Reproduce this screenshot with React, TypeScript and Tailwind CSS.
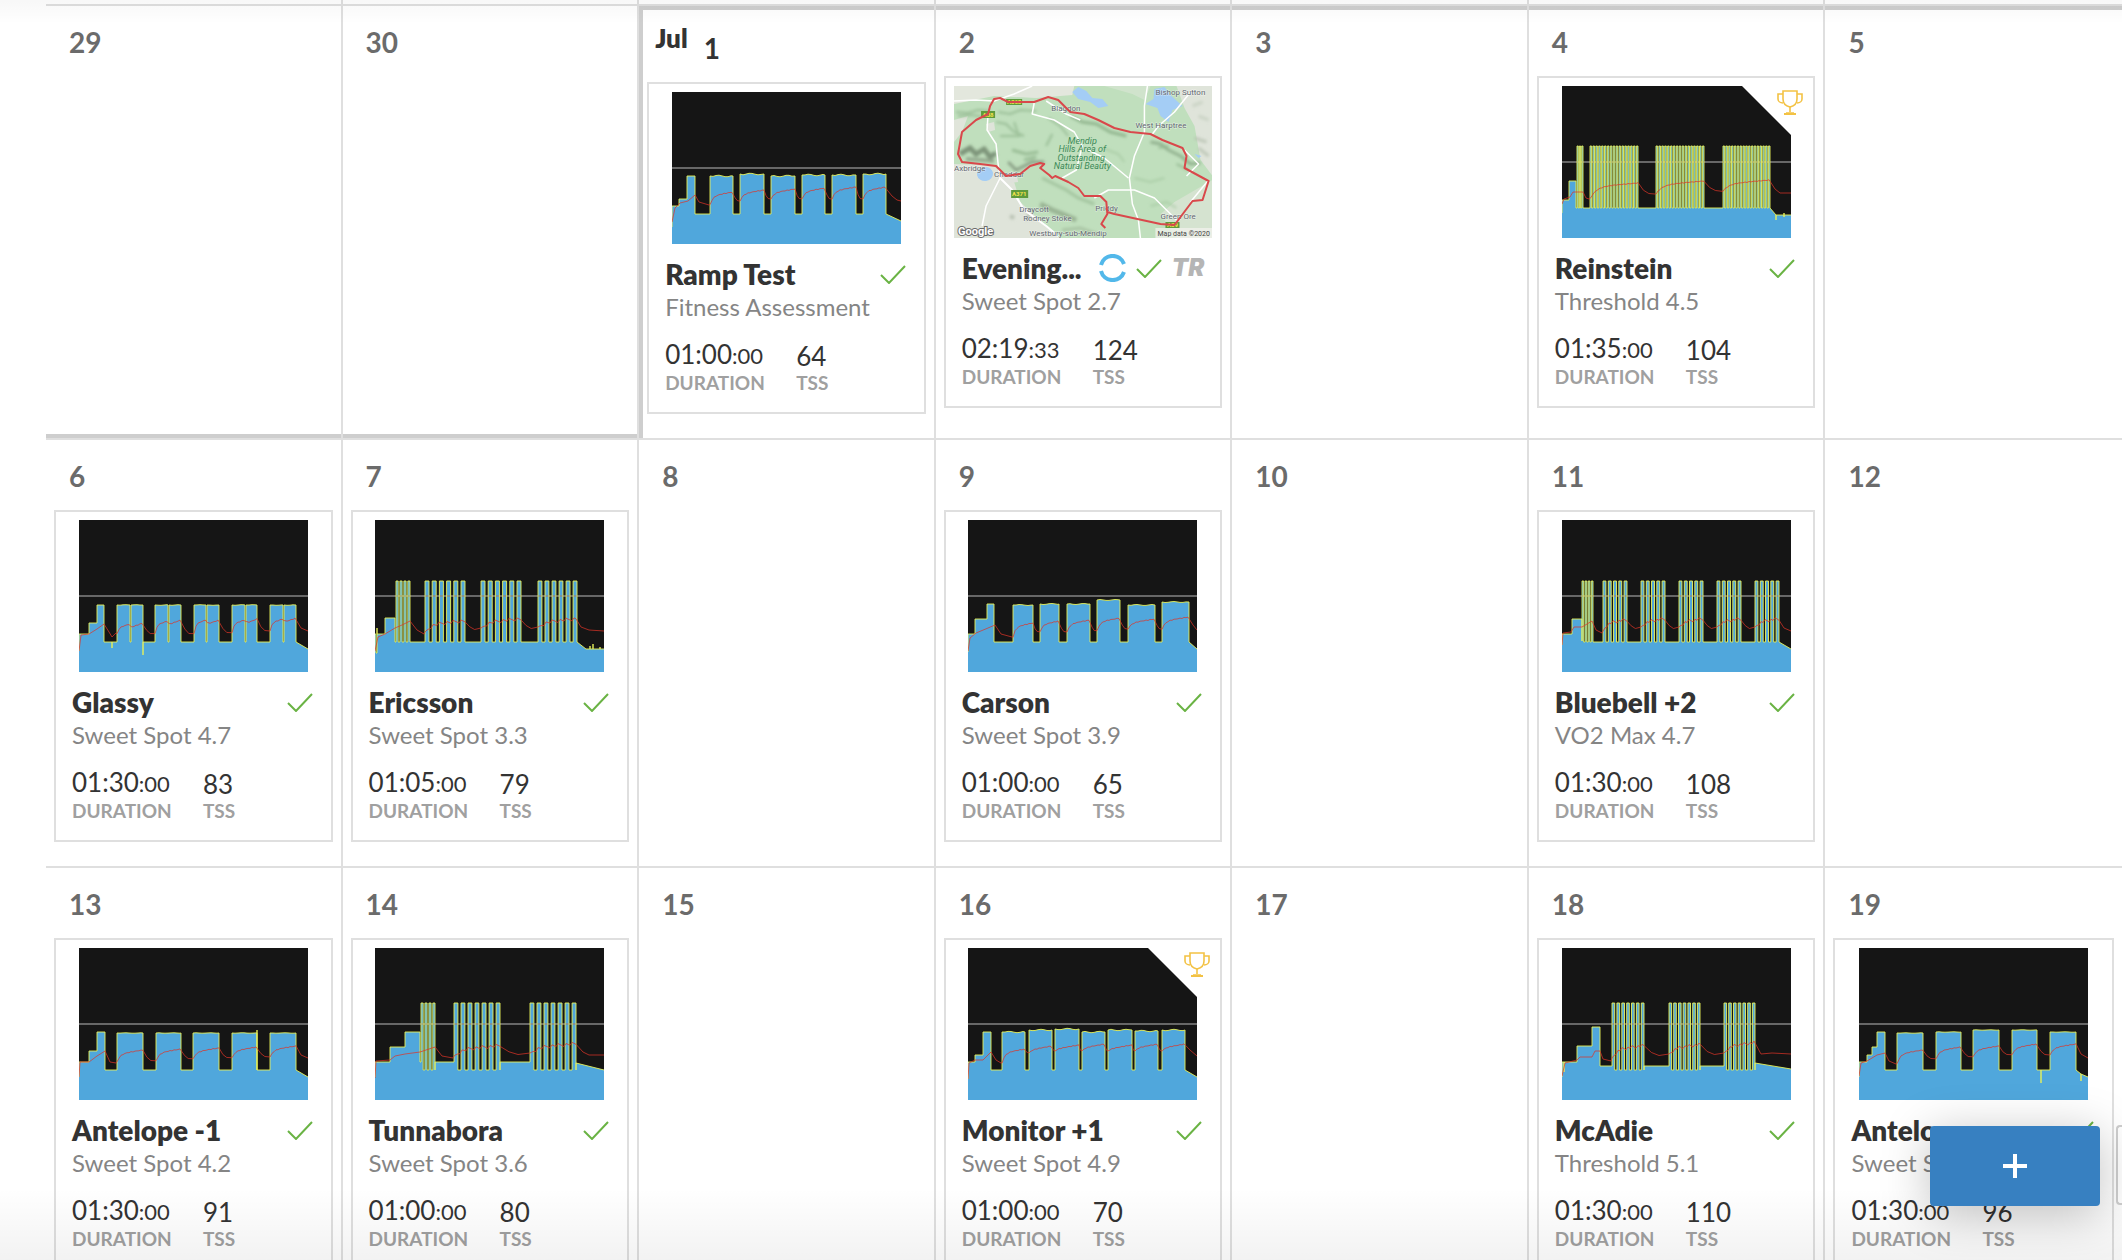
import React from "react";
import { clsx } from "clsx";

type Point = [number, number];
// [start x, end x, top y]
type Block = [number, number, number];
// [start x, end x, resting y, peak y, sawtooth period]
type Effort = [number, number, number, number, number?];

interface Chart {
  power: string;
  heart: string;
}

interface Workout {
  name: string;
  level: string;
  time: string;
  seconds: string;
  tss: number;
  chart?: Chart;
  record?: boolean;
  outside?: boolean;
}

interface Day {
  date: number;
  month?: string;
  edge?: string;
  workout?: Workout;
}

const CHART_W = 229;
const CHART_H = 152;

function blocks(list: Block[], low: number, wobble = 0) {
  return list
    .map(([from, to, top]) => {
      let d = `H${from}V${top}`;
      for (let x = from + 3; wobble && x < to; x += 3) {
        d += `L${x} ${(top + Math.sin(x * 1.7) * wobble).toFixed(1)}`;
      }
      return d + `L${to} ${top}V${low}`;
    })
    .join("");
}

function bursts(from: number, to: number, count: number, top: number, low: number) {
  const period = (to - from) / (count - 0.45);
  const bar = period * 0.55;
  let d = `H${from}`;
  for (let i = 0; i < count; i++) {
    const x = from + i * period;
    d += `H${x.toFixed(1)}V${top}H${(x + bar).toFixed(1)}V${low}`;
  }
  return d;
}

function heart(start: Point[], efforts: Effort[], end: Point[]) {
  const pts: Point[] = [...start];
  efforts.forEach(([from, to, rest, peak, saw], i) => {
    for (let x = from; x <= to; x += 2) {
      const t = (x - from) / (to - from);
      const base = peak + (1 - t) * 4 + (rest - peak - 4) * Math.exp(-t * 8);
      const tooth = saw ? (((x - from) % saw) / saw - 0.5) * 4 : Math.sin(x * 1.3) * 0.4;
      pts.push([x, base + tooth]);
    }
    const next = efforts[i + 1];
    if (next) {
      const gap = next[0] - to;
      pts.push([to + gap * 0.3, peak + (next[2] - peak) * 0.65]);
      pts.push([to + gap * 0.6, next[2] - 0.5]);
    }
  });
  return "M" + [...pts, ...end].map(([x, y]) => `${x.toFixed(1)} ${y.toFixed(1)}`).join("L");
}

const rampTest: Chart = {
  power:
    "M0 135V114H7V107H15V84H23V122" +
    blocks([[38, 61, 84], [68, 92, 82], [99, 123, 84], [130, 153, 83], [160, 184, 83], [191, 214, 82]], 122, 0.8) +
    "L229 129",
  heart: heart(
    [[0, 130], [3, 116], [8, 111], [16, 109], [23, 103], [27, 110], [37, 113]],
    [[38, 61, 113, 100], [68, 92, 109, 98], [99, 123, 107, 97], [130, 153, 107, 96], [160, 184, 107, 95], [191, 214, 107, 95]],
    [[220, 104], [225, 108], [229, 109]],
  ),
};

const reinstein: Chart = {
  power:
    "M0 127V114H7V95H14V122" +
    bursts(15, 21, 3, 60, 122) +
    bursts(28, 76, 17, 60, 122) +
    bursts(94, 142, 17, 60, 122) +
    bursts(161, 208, 17, 60, 122) +
    "L214 129V134V129H222V127V131V129H229",
  heart: heart(
    [[0, 118], [2, 113], [8, 111], [11, 106], [21, 106], [24, 112], [27, 113]],
    [[28, 76, 113, 97], [94, 142, 108, 95], [161, 208, 105, 94]],
    [[213, 103], [218, 107], [229, 107]],
  ),
};

const glassy: Chart = {
  power:
    "M0 131V114H10V103H18V85H25V122H33V128V122" +
    blocks([[38, 51, 85], [52, 64, 85]], 122, 0.3) +
    "V135V122" +
    blocks(
      [[76, 89, 85], [90, 102, 85], [115, 127, 85], [128, 140, 85], [153, 166, 85], [167, 178, 85], [191, 204, 85], [205, 217, 85]],
      122,
      0.3,
    ) +
    "L229 129",
  heart: heart(
    [[0, 131], [2, 115], [10, 114], [18, 109], [25, 104], [30, 112], [33, 117], [37, 113]],
    [[38, 51, 114, 104], [53, 64, 107, 103], [76, 89, 114, 101], [91, 102, 104, 100], [115, 127, 114, 100], [129, 140, 103, 100],
      [153, 166, 113, 100], [168, 178, 102, 99], [191, 204, 111, 99], [206, 217, 101, 98]],
    [[222, 108], [229, 111]],
  ),
};

const ericsson: Chart = {
  power:
    "M0 114H1V133H2V108V114H10V98H20V122" +
    bursts(21, 35, 4, 61, 122) +
    bursts(50, 90, 6, 61, 122) +
    bursts(106, 146, 6, 61, 122) +
    bursts(163, 202, 6, 61, 122) +
    "L211 129H215V126V129H218V124V129H225V127V129H229",
  heart: heart(
    [[0, 131], [3, 117], [10, 114], [20, 108], [27, 105], [35, 101], [42, 110], [49, 114]],
    [[50, 90, 114, 101, 7], [106, 146, 110, 99, 7], [163, 202, 109, 99, 7]],
    [[206, 107], [214, 110], [229, 111]],
  ),
};

const carson: Chart = {
  power:
    "M0 132V114H7V99H19V84H26V122" +
    blocks([[45, 65, 85], [72, 91, 84], [99, 122, 84], [129, 152, 80], [160, 187, 85], [194, 221, 82]], 122, 0.5) +
    "L229 129",
  heart: heart(
    [[0, 131], [2, 118], [8, 113], [20, 108], [27, 105], [33, 114], [44, 117]],
    [[45, 65, 117, 103], [72, 91, 112, 101], [99, 122, 112, 100], [129, 152, 111, 98], [160, 187, 109, 99], [194, 221, 109, 97]],
    [[225, 105], [229, 110]],
  ),
};

const bluebell: Chart = {
  power:
    "M0 125V114H10V99H20V121" +
    bursts(20, 31, 4, 61, 122) +
    bursts(41, 65, 5, 61, 122) +
    bursts(79, 103, 5, 61, 122) +
    bursts(117, 141, 5, 61, 122) +
    bursts(155, 179, 5, 61, 122) +
    bursts(193, 217, 5, 61, 122) +
    "L229 129",
  heart: heart(
    [[0, 125], [1, 113], [9, 112], [12, 107], [20, 107], [30, 101], [34, 110], [40, 113]],
    [[41, 65, 113, 100, 5], [79, 103, 109, 99, 5], [117, 141, 109, 99, 5], [155, 179, 109, 99, 5], [193, 217, 109, 99, 5]],
    [[222, 108], [229, 111]],
  ),
};

const antelopeMinus: Chart = {
  power:
    "M0 129V114H10V103H18V84H26V122" +
    blocks([[38, 64, 85], [77, 102, 85], [114, 140, 85], [153, 178, 85]], 122, 0.2) +
    "V82V122" +
    blocks([[191, 217, 85]], 122, 0.2) +
    "L229 129",
  heart: heart(
    [[0, 129], [1, 114], [10, 114], [18, 108], [26, 103], [31, 114], [37, 115]],
    [[38, 64, 114, 102], [77, 102, 113, 101], [114, 140, 111, 100], [153, 178, 110, 99], [191, 217, 109, 98]],
    [[222, 107], [229, 110]],
  ),
};

const tunnabora: Chart = {
  power:
    "M0 129V114H15V99H30V84H45V114" +
    bursts(46, 60, 4, 55, 122) +
    "V114" +
    bursts(79, 125, 7, 55, 122) +
    "V114" +
    bursts(155, 201, 7, 55, 122) +
    "V115L229 122",
  heart: heart(
    [[0, 130], [1, 113], [15, 112], [20, 108], [30, 106], [45, 104], [60, 99], [67, 108], [78, 110]],
    [[79, 125, 110, 98, 7], [155, 201, 107, 96, 7]],
    [[208, 104], [214, 107], [229, 107]],
  ),
};

const monitor: Chart = {
  power:
    "M0 131V114H7V107H15V84H23V122" +
    blocks([[34, 57, 84], [61, 84, 82], [87, 111, 81], [114, 137, 84], [140, 164, 82], [167, 190, 83], [194, 217, 82]], 122, 0.7) +
    "L229 129",
  heart: heart(
    [[0, 131], [1, 115], [7, 112], [15, 112], [23, 104], [28, 112], [33, 115]],
    [[34, 57, 115, 101], [61, 84, 105, 98], [87, 111, 103, 97], [114, 137, 103, 96], [140, 164, 103, 97], [167, 190, 103, 96], [194, 217, 103, 96]],
    [[222, 102], [229, 108]],
  ),
};

const mcAdie: Chart = {
  power:
    "M0 129V114H2V124V114H15V98H30V79H38V118" +
    bursts(50, 82, 7, 55, 122) +
    "V118" +
    bursts(107, 138, 7, 55, 122) +
    "V118" +
    bursts(162, 193, 7, 55, 122) +
    "V115L229 121",
  heart: heart(
    [[0, 128], [3, 115], [15, 112], [18, 109], [30, 109], [33, 103], [38, 103], [41, 111], [49, 113]],
    [[50, 82, 112, 98, 5], [107, 138, 108, 97, 5], [162, 193, 107, 95, 5]],
    [[199, 106], [210, 105], [229, 106]],
  ),
};

const antelope: Chart = {
  power:
    "M0 129V114H8V107H13V99H18V84H26V122" +
    blocks([[38, 64, 85], [77, 102, 84], [114, 140, 82], [153, 178, 82]], 122, 0.2) +
    "H182V135V122" +
    blocks([[191, 217, 84]], 122, 0.2) +
    "L222 126V133V126L229 129",
  heart: heart(
    [[0, 128], [2, 115], [8, 113], [18, 107], [26, 105], [30, 113], [37, 116]],
    [[38, 64, 116, 102], [77, 102, 111, 99], [114, 140, 109, 98], [153, 178, 107, 96], [191, 217, 107, 96]],
    [[222, 106], [229, 110]],
  ),
};

// thick rules that mark where one month ends and the next begins
const startLeft = "shadow-[inset_4px_4px_0_#cecece]";
const startTop = "shadow-[inset_0_4px_0_#cecece]";
const endBottom = "shadow-[inset_0_-4px_0_#cecece]";

const days: Day[] = [
  { date: 29, edge: endBottom },
  { date: 30, edge: endBottom },
  { date: 1, month: "Jul", edge: startLeft, workout: { name: "Ramp Test", level: "Fitness Assessment", time: "01:00", seconds: ":00", tss: 64, chart: rampTest } },
  { date: 2, edge: startTop, workout: { name: "Evening...", level: "Sweet Spot 2.7", time: "02:19", seconds: ":33", tss: 124, outside: true } },
  { date: 3, edge: startTop },
  { date: 4, edge: startTop, workout: { name: "Reinstein", level: "Threshold 4.5", time: "01:35", seconds: ":00", tss: 104, chart: reinstein, record: true } },
  { date: 5, edge: startTop },
  { date: 6, workout: { name: "Glassy", level: "Sweet Spot 4.7", time: "01:30", seconds: ":00", tss: 83, chart: glassy } },
  { date: 7, workout: { name: "Ericsson", level: "Sweet Spot 3.3", time: "01:05", seconds: ":00", tss: 79, chart: ericsson } },
  { date: 8 },
  { date: 9, workout: { name: "Carson", level: "Sweet Spot 3.9", time: "01:00", seconds: ":00", tss: 65, chart: carson } },
  { date: 10 },
  { date: 11, workout: { name: "Bluebell +2", level: "VO2 Max 4.7", time: "01:30", seconds: ":00", tss: 108, chart: bluebell } },
  { date: 12 },
  { date: 13, workout: { name: "Antelope -1", level: "Sweet Spot 4.2", time: "01:30", seconds: ":00", tss: 91, chart: antelopeMinus } },
  { date: 14, workout: { name: "Tunnabora", level: "Sweet Spot 3.6", time: "01:00", seconds: ":00", tss: 80, chart: tunnabora } },
  { date: 15 },
  { date: 16, workout: { name: "Monitor +1", level: "Sweet Spot 4.9", time: "01:00", seconds: ":00", tss: 70, chart: monitor, record: true } },
  { date: 17 },
  { date: 18, workout: { name: "McAdie", level: "Threshold 5.1", time: "01:30", seconds: ":00", tss: 110, chart: mcAdie } },
  { date: 19, workout: { name: "Antelope", level: "Sweet Spot", time: "01:30", seconds: ":00", tss: 96, chart: antelope } },
];

function WorkoutChart({ chart, record }: { chart: Chart; record?: boolean }) {
  return (
    <svg viewBox={`0 0 ${CHART_W} ${CHART_H}`} className="mx-auto block h-[152px] w-[229px]">
      <rect width={CHART_W} height={CHART_H} fill="#151515" />
      <path d={`${chart.power}V${CHART_H}H0Z`} fill="#50a7dc" />
      <path d="M0 76H229" stroke="#8a8a8a" strokeOpacity="0.7" strokeWidth="2" />
      <path d={chart.power} fill="none" stroke="#e8f25a" strokeOpacity="0.9" strokeWidth="1" />
      <path d={chart.heart} fill="none" stroke="#dd3327" strokeOpacity="0.9" strokeWidth="0.8" />
      {record && <path d="M180 0H229V49Z" fill="#fff" />}
    </svg>
  );
}

function RouteMap() {
  return (
    <svg viewBox="0 0 258 152" preserveAspectRatio="none" className="block h-[152px] w-full" fontFamily="Roboto, 'Noto Sans', sans-serif">
      <defs>
        <filter id="relief" x="-10%" y="-10%" width="120%" height="120%">
          <feGaussianBlur stdDeviation="1.4" />
        </filter>
      </defs>
      <rect width="258" height="152" fill="#c0dfbd" />
      <path d="M0 0H120L118 9L82 12L40 10L0 18Z" fill="#e3e7dd" />
      <path d="M0 34L14 30L8 46L0 56Z" fill="#e0e5da" />
      <path d="M0 78L38 79L60 96L66 116L92 140L106 152H0Z" fill="#dfe4da" />
      <path d="M32 38L40 36L41 44L34 46Z" fill="#dfe4da" />
      <path d="M44 88L62 86L64 96L48 98Z" fill="#dfe2db" />
      <path d="M150 0H196L190 14L178 8Z" fill="#d0e3cc" />
      <path d="M222 0H258V90L246 74L240 40L230 22Z" fill="#dfe4da" />
      <path d="M258 94V152H222L206 128L220 116Z" fill="#d5e3d0" />
      <g filter="url(#relief)" fill="none" stroke="#8fb48c" strokeWidth="2" strokeOpacity="0.8">
        <path d="M6 68L16 62L22 68L30 63L36 71L42 67" stroke="#6d8269" strokeWidth="5" />
        <path d="M12 73L28 74L40 75" stroke="#8b9f86" strokeWidth="4" />
        <path d="M54 76L62 84L70 80L78 76L90 76" stroke="#7c8f78" strokeWidth="3" />
        <path d="M58 64L72 68L84 66M70 74L82 71" strokeWidth="3" />
        <path d="M2 26L14 27L24 24L36 25M44 26L56 28L66 24L82 25" />
        <path d="M4 30L18 29L30 31" />
        <path d="M42 36L52 38L60 46L70 50M46 50L66 50M60 36L64 48" />
        <path d="M88 92L100 98L112 104L124 112L140 118" stroke="#9bbd97" strokeWidth="3" />
        <path d="M86 118L98 124L108 128L122 134" stroke="#8fa98a" strokeWidth="5" />
        <path d="M108 144L126 142L142 148" stroke="#a3bd9e" strokeWidth="3" />
        <path d="M116 30L128 36L142 38L156 46L172 50" stroke="#86ab83" strokeWidth="3" />
        <path d="M196 56L206 58L214 64L226 70L236 78L246 77" stroke="#86a582" strokeWidth="3" />
        <path d="M204 62L214 60M222 78L234 84" />
        <path d="M94 32L106 40L114 50M98 48L92 60" />
        <path d="M148 62L164 68L170 76M180 92L196 96L210 92M196 120L212 116L222 122" stroke="#a5c9a1" />
        <path d="M60 132L56 130M76 128L72 134" stroke="#aeb8a8" strokeWidth="4" />
        <path d="M240 52L252 56M244 62L254 70" stroke="#b8c2b2" strokeWidth="3" />
        <path d="M238 20L248 16M244 30L254 34" stroke="#c6cfc1" strokeWidth="3" />
      </g>
      <path d="M118 6L124 1L132 5L138 12L148 13L154 20L144 22L136 16L124 13Z" fill="#a4cdf5" />
      <path d="M200 3L210 1L217 10L228 20L218 24L214 36L206 30L203 22L191 18L199 13Z" fill="#a4cdf5" />
      <path d="M240 68L247 70L244 72Z" fill="#a4cdf5" />
      <ellipse cx="31" cy="88" rx="8" ry="7" fill="#a4cdf5" transform="rotate(-10 31 88)" />
      <g fill="none" stroke="#fff" strokeWidth="1.5" strokeLinejoin="round">
        <path d="M0 15L22 14L40 15L60 8L78 0" />
        <path d="M34 28L33 44L42 58L44 78L46 92L32 120L28 140" />
        <path d="M80 17L78 28L100 34L120 46L128 60L122 84L108 92" />
        <path d="M92 15L112 28L126 34" />
        <path d="M46 92L58 104L70 124L92 140L104 150" strokeWidth="2" />
        <path d="M134 64L150 72L174 92" />
        <path d="M193 0L190 20L190 46L180 70L175 92L178 118L184 134L186 152" />
        <path d="M236 6L220 26L204 40L198 48" />
        <path d="M140 112L154 104L180 104L200 112L222 134" />
        <path d="M254 94L236 116M230 64L244 78L232 90" />
      </g>
      <g>
        <rect x="52" y="13" width="16" height="6" fill="#5e9a3c" />
        <rect x="27" y="25" width="14" height="7" fill="#5e9a3c" />
        <rect x="57" y="104" width="17" height="8" fill="#5e9a3c" />
        <rect x="211" y="136" width="14" height="6" fill="#5e9a3c" />
      </g>
      <g fontSize="6" fontWeight="700" fill="#f4e24a" textAnchor="middle">
        <text x="60" y="18">A368</text>
        <text x="34" y="31">A38</text>
        <text x="65" y="110">A371</text>
        <text x="218" y="141">A39</text>
      </g>
      <g fontSize="8" fill="#5f666e" stroke="#fff" strokeWidth="1" strokeOpacity="0.5" paintOrder="stroke">
        <text x="201" y="9">Bishop Sutton</text>
        <text x="97" y="25">Blagdon</text>
        <text x="181" y="42">West Harptree</text>
        <text x="0" y="85">Axbridge</text>
        <text x="40" y="91">Cheddar</text>
        <text x="65" y="126">Draycott</text>
        <text x="69" y="135">Rodney Stoke</text>
        <text x="141" y="125">Priddy</text>
        <text x="206" y="133">Green Ore</text>
        <text x="75" y="150">Westbury-sub-Mendip</text>
      </g>
      <path
        d="M151 142L147 138L153 128L152 116L146 110L130 110L124 102L114 96L101 90L98 92L95 89L86 82L90 78L86 77L76 80L66 88L52 90L46 84L42 80L26 78L8 76L4 68L8 46L22 34L34 28L36 20L40 13L46 12L54 16L80 16L94 11L104 14L116 26L130 28L144 34L160 42L176 46L196 48L208 54L228 62L232 70L230 82L254 95L248 114L238 115L220 139L206 138L160 128L153 126"
        fill="none"
        stroke="#d9484b"
        strokeWidth="2"
        strokeLinejoin="round"
      />
      <g fontSize="9" fontStyle="italic" fill="#3c8a58" textAnchor="middle">
        <text x="128" y="58">Mendip</text>
        <text x="128" y="66">Hills Area of</text>
        <text x="127" y="75">Outstanding</text>
        <text x="128" y="83">Natural Beauty</text>
      </g>
      <rect x="201" y="142" width="57" height="10" fill="#f2f2ee" fillOpacity="0.75" />
      <text x="203" y="150" fontSize="7" fill="#444">Map data ©2020</text>
      <text x="4" y="149" fontSize="11" fontWeight="700" fill="#fff" stroke="#6b6b6b" strokeWidth="2" paintOrder="stroke">Google</text>
    </svg>
  );
}

function CheckIcon() {
  return (
    <svg viewBox="0 0 26 20" className="h-5 w-[26px] shrink-0" role="img" aria-label="Completed">
      <path d="M1 11L9 19L25 2" fill="none" stroke="#6ab344" strokeWidth="2" />
    </svg>
  );
}

function SyncIcon() {
  return (
    <svg viewBox="0 0 28 28" className="h-7 w-7 shrink-0" role="img" aria-label="Synced">
      <path d="M3 11A12 12 0 0 1 26 10M3 17A12 12 0 0 0 26 18" fill="none" stroke="#52b8ea" strokeWidth="4" />
    </svg>
  );
}

function TrophyIcon() {
  return (
    <svg viewBox="0 0 26 26" className="absolute top-3 right-[10px] h-[26px] w-[26px]" fill="none" stroke="#f3c244" strokeWidth="1.6" role="img" aria-label="Personal record">
      <path d="M6 1H20V9C20 14 17 16 13 17C9 16 6 14 6 9Z" />
      <path d="M6 4H1V9C1 11 3 13 6 13M20 4H25V9C25 11 23 13 20 13" />
      <path d="M13 17V22M9 23H17" />
      <path d="M7 24H19" strokeWidth="2" />
    </svg>
  );
}

function WorkoutCard({ workout }: { workout: Workout }) {
  const { name, level, time, seconds, tss, chart, record, outside } = workout;
  return (
    <article className="relative mx-2 h-[332px] border-2 border-[#dfdfdf] bg-white pt-2">
      <div className="px-2">{chart ? <WorkoutChart chart={chart} record={record} /> : <RouteMap />}</div>
      {record && <TrophyIcon />}
      <div className="px-4 pt-[14px]">
        <div className="flex items-center">
          <h3 className="flex-1 text-[28px] leading-8 font-extrabold whitespace-nowrap text-[#333]">{name}</h3>
          {outside ? (
            <div className="flex items-center gap-[10px]">
              <SyncIcon />
              <CheckIcon />
              <span className="font-[Inter,sans-serif] text-2xl leading-8 font-black text-[#b5b5b5] italic">TR</span>
            </div>
          ) : (
            <div className="pr-[2px]">
              <CheckIcon />
            </div>
          )}
        </div>
        <p className="pt-px text-2xl leading-8 text-[#858585]">{level}</p>
        <dl className="mt-[15px] flex">
          <div className="flex w-[131px] flex-col-reverse">
            <dt className="text-[19px] leading-[22px] font-bold text-[#a0a0a0]">DURATION</dt>
            <dd className="text-[26px] leading-8 text-[#333]">
              {time}
              <span className="text-[22px]">{seconds}</span>
            </dd>
          </div>
          <div className="flex flex-col-reverse">
            <dt className="text-[19px] leading-[22px] font-bold text-[#a0a0a0]">TSS</dt>
            <dd className="text-[26px] leading-8 text-[#333]">{tss}</dd>
          </div>
        </dl>
      </div>
    </article>
  );
}

function DayCell({ day, last }: { day: Day; last: boolean }) {
  return (
    <section className={clsx("min-h-[428px] border-b-2 border-[#dfdfdf] pb-6", !last && "border-r-2", day.edge)}>
      {day.month ? (
        <header className="flex h-[76px] items-start pt-4 pl-4 font-bold text-[#333]">
          <span className="text-[26px] leading-8 font-extrabold">{day.month}</span>
          <span className="ml-4 pt-[10px] text-[28px] leading-8">{day.date}</span>
        </header>
      ) : (
        <header className="h-[70px] pt-5 pl-[23px] text-[28px] leading-8 font-bold text-[#6b6b6b]">{day.date}</header>
      )}
      {day.workout && <WorkoutCard workout={day.workout} />}
    </section>
  );
}

export default function App() {
  return (
    <main className="relative h-screen overflow-hidden bg-white pl-[46px] font-[Lato,'Open_Sans',sans-serif]">
      <div className="grid grid-cols-7">
        {Array.from({ length: 7 }, (_, i) => (
          <div key={i} className={clsx("h-[6px] border-b-2 border-[#dfdfdf]", i < 6 && "border-r-2")} />
        ))}
        {days.map((day, i) => (
          <DayCell key={i} day={day} last={i % 7 === 6} />
        ))}
      </div>
      <div className="pointer-events-none absolute inset-x-0 top-0 h-6 bg-linear-to-b from-black/3 to-transparent" />
      <div className="pointer-events-none absolute inset-x-0 bottom-0 h-[72px] bg-linear-to-t from-black/5 to-transparent" />
      <div className="absolute right-0 bottom-[55px] h-20 w-[6px] rounded-l border-2 border-r-0 border-[#cecece] bg-white" />
      <button
        type="button"
        aria-label="Add workout"
        className="absolute right-[22px] bottom-[54px] flex h-20 w-[170px] items-center justify-center rounded bg-[#3780c1] shadow-[0_8px_48px_rgba(0,0,0,0.25)]"
      >
        <svg viewBox="0 0 24 24" className="h-6 w-6">
          <path d="M12 0V24M0 12H24" stroke="#fff" strokeWidth="4" />
        </svg>
      </button>
    </main>
  );
}
